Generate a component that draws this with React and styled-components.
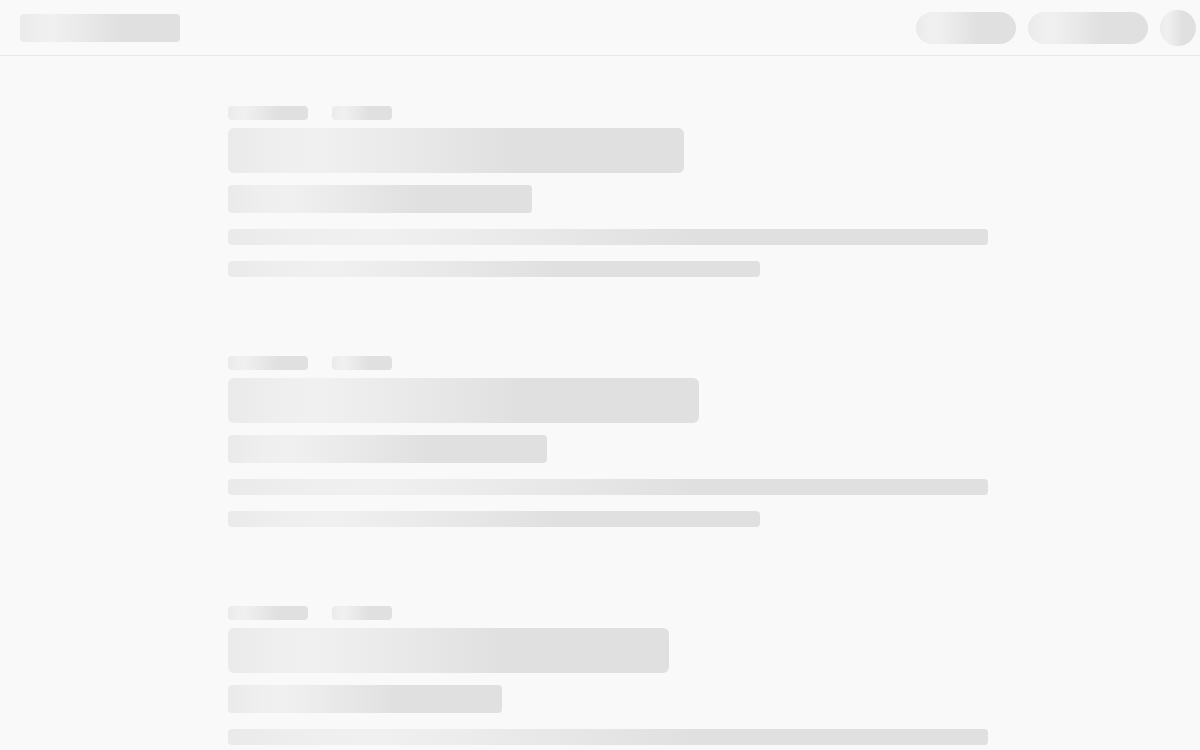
import React from "react";
import styled, { createGlobalStyle, css } from "styled-components";

const GlobalStyle = createGlobalStyle`
  html, body {
    margin: 0;
    padding: 0;
    background: #f9f9f9;
    font-family: "Inter", "Liberation Sans", sans-serif;
  }
`;

const shimmer = css`
  background: linear-gradient(
    90deg,
    #eaeaea 0%,
    #efefef 12%,
    #f0f0f0 20%,
    #e8e8e8 42%,
    #e0e0e0 62%,
    #e0e0e0 100%
  );
`;

const Page = styled.div`
  min-height: 750px;
  background: #f9f9f9;
`;

const Header = styled.header`
  height: 55px;
  display: flex;
  align-items: center;
  justify-content: space-between;
  padding: 0 4px 0 20px;
  border-bottom: 1px solid #e9e9e9;
`;

const Logo = styled.div`
  ${shimmer};
  width: 160px;
  height: 28px;
  border-radius: 4px;
`;

const Actions = styled.div`
  display: flex;
  align-items: center;
  gap: 12px;
`;

const Pill = styled.div`
  ${shimmer};
  width: ${(p) => p.$w}px;
  height: 32px;
  border-radius: 16px;
`;

const Avatar = styled.div`
  ${shimmer};
  width: 36px;
  height: 36px;
  border-radius: 50%;
`;

const Main = styled.main`
  padding: 50px 0 0 16px;
`;

const Feed = styled.div`
  width: 760px;
  margin: 0 auto;
  display: flex;
  flex-direction: column;
  gap: 79px;
`;

const Article = styled.article`
  display: flex;
  flex-direction: column;
`;

const Meta = styled.div`
  display: flex;
  gap: 24px;
  margin-bottom: 8px;
`;

const Bar = styled.div`
  ${shimmer};
  width: ${(p) => p.$w}px;
  height: ${(p) => p.$h}px;
  border-radius: ${(p) => p.$r || 4}px;
  margin-bottom: ${(p) => p.$mb || 0}px;
`;

const articles = [
  { title: 456, sub: 304 },
  { title: 471, sub: 319 },
  { title: 441, sub: 274 },
];

export default function App() {
  return (
    <Page>
      <GlobalStyle />
      <Header>
        <Logo />
        <Actions>
          <Pill $w={100} />
          <Pill $w={120} />
          <Avatar />
        </Actions>
      </Header>
      <Main>
        <Feed>
          {articles.map((a, i) => (
            <Article key={i}>
              <Meta>
                <Bar $w={80} $h={14} />
                <Bar $w={60} $h={14} />
              </Meta>
              <Bar $w={a.title} $h={45} $r={6} $mb={12} />
              <Bar $w={a.sub} $h={28} $r={4} $mb={16} />
              <Bar $w={760} $h={16} $mb={16} />
              <Bar $w={532} $h={16} />
            </Article>
          ))}
        </Feed>
      </Main>
    </Page>
  );
}
